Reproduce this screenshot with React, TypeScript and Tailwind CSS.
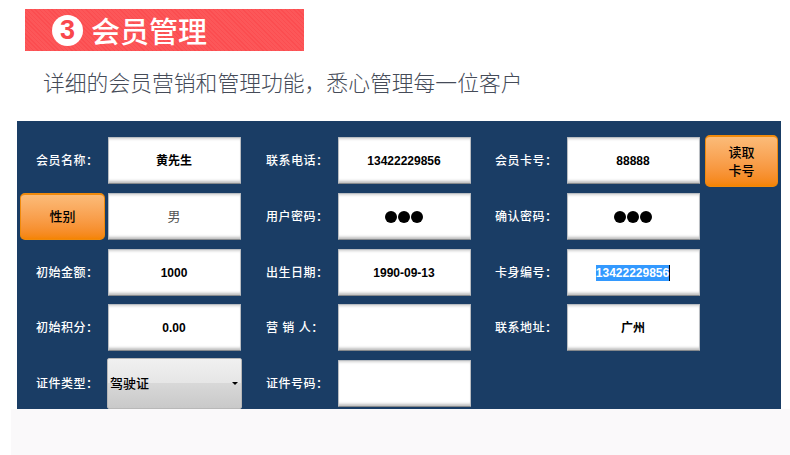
const fieldClass =
  "w-[133px] h-[47px] pr-[1px] flex items-center justify-center bg-white border border-[#b9bdc2] border-b-[#86898c] text-[12px] text-black font-bold rounded-[1px] shadow-[inset_0_3px_3px_-2px_#cfcfcf,inset_0_-4px_3px_-2px_#bdbdbd]";

const orangeClass =
  "flex items-center justify-center text-center text-[13px] font-medium text-black rounded-[5px] border border-[#f08a0c] border-t-2 bg-gradient-to-b from-[#fbbb78] to-[#f58400]";

const Label = ({ text }: { text: string }) => (
  <div className="text-[12px] font-medium text-white tracking-[0.5px]">{text}</div>
);

const Field = ({ value, muted }: { value?: string; muted?: boolean }) => (
  <div className={fieldClass}>
    <span className={muted ? "text-[13px] font-normal text-[#555]" : ""}>{value}</span>
  </div>
);

const Dots = () => (
  <div className={fieldClass}>
    <div className="flex gap-[1px]">
      <span className="w-[12px] h-[12px] rounded-full bg-black" />
      <span className="w-[12px] h-[12px] rounded-full bg-black" />
      <span className="w-[12px] h-[12px] rounded-full bg-black" />
    </div>
  </div>
);

export default function App() {
  return (
    <div className="w-[790px] h-[455px] overflow-hidden bg-white font-['Liberation_Sans','Noto_Sans_CJK_SC',sans-serif]">
      {/* Heading */}
      <div className="h-[121px] pt-[9px] pl-[25px]">
        <div className="w-[279px] h-[42px] pl-[27px] flex items-center gap-[9px] bg-[#fb4f52] bg-[repeating-linear-gradient(45deg,#fb4d50_0px,#fb4d50_1px,#fc5759_1px,#fc5759_3px)]">
          <div className="w-[31px] h-[31px] rounded-full bg-white flex items-center justify-center text-[27px] font-bold leading-none text-[#f9484c]">
            3
          </div>
          <div className="-ml-[1px] text-[29px] font-medium leading-none text-white font-['Noto_Sans_CJK_SC',sans-serif]">会员管理</div>
        </div>
        <div className="mt-[16px] pl-[18px] text-[21.8px] leading-[30px] font-light text-[#454b58] font-['Noto_Sans_CJK_SC',sans-serif]">
          详细的会员营销和管理功能，悉心管理每一位客户
        </div>
      </div>

      {/* Member form */}
      <div className="w-[764px] h-[288px] ml-[17px] bg-[#1a3d65] pt-[16px] overflow-hidden">
        <div className="grid grid-cols-[91px_133px_97px_133px_96px_133px_5px_73px] grid-rows-[47px_47px_46px_47px_48px] gap-y-[9px] items-start">
          <div className="pl-[19px] h-full flex items-center"><Label text="会员名称：" /></div>
          <Field value="黄先生" />
          <div className="pl-[25px] h-full flex items-center"><Label text="联系电话：" /></div>
          <Field value="13422229856" />
          <div className="pl-[24px] h-full flex items-center"><Label text="会员卡号：" /></div>
          <Field value="88888" />
          <div />
          <div className={`${orangeClass} h-[52px] -mt-[2px]`}>
            <span className="leading-[18px]">读取<br />卡号</span>
          </div>

          <div className="pl-[3px] pr-[3px] h-full">
            <div className={`${orangeClass} h-full`}>性别</div>
          </div>
          <Field value="男" muted />
          <div className="pl-[25px] h-full flex items-center"><Label text="用户密码：" /></div>
          <Dots />
          <div className="pl-[24px] h-full flex items-center"><Label text="确认密码：" /></div>
          <Dots />
          <div />
          <div />

          <div className="pl-[19px] h-[47px] flex items-center"><Label text="初始金额：" /></div>
          <Field value="1000" />
          <div className="pl-[25px] h-[47px] flex items-center"><Label text="出生日期：" /></div>
          <Field value="1990-09-13" />
          <div className="pl-[24px] h-[47px] flex items-center"><Label text="卡身编号：" /></div>
          <div className={fieldClass}>
            <span className="bg-[#3399ff] text-white leading-[16px] border-r border-black">13422229856</span>
          </div>
          <div />
          <div />

          <div className="pl-[19px] h-full flex items-center"><Label text="初始积分：" /></div>
          <Field value="0.00" />
          <div className="pl-[25px] h-full flex items-center"><Label text="营 销 人：" /></div>
          <Field />
          <div className="pl-[24px] h-full flex items-center"><Label text="联系地址：" /></div>
          <Field value="广州" />
          <div />
          <div />

          <div className="pl-[19px] h-full flex items-center"><Label text="证件类型：" /></div>
          <div className="w-[135px] h-[51px] -ml-[1px] -mt-[2px] flex items-center justify-between pl-[2px] pr-[3px] rounded-[2px] border border-[#b8b8b8] bg-[linear-gradient(#f0f0f0_0%,#e6e6e6_48%,#d8d8d8_50%,#c9c9c9_100%)] text-[13px] font-medium text-black">
            <span>驾驶证</span>
            <span className="w-0 h-0 border-x-[3px] border-x-transparent border-t-[3px] border-t-black" />
          </div>
          <div className="pl-[25px] h-full flex items-center"><Label text="证件号码：" /></div>
          <Field />
          <div />
          <div />
          <div />
          <div />
        </div>
      </div>

      {/* Footer band */}
      <div className="ml-[11px] h-[46px] bg-[#faf9fa]" />
    </div>
  );
}
